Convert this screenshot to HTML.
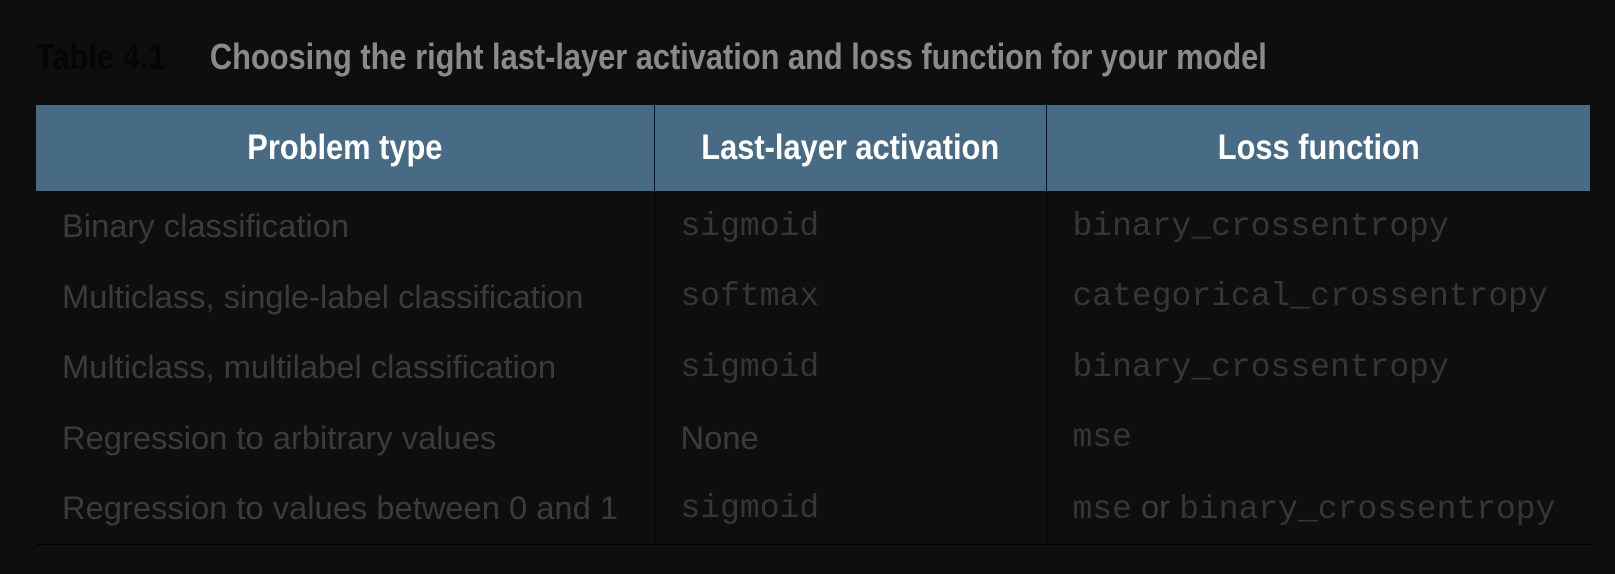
<!DOCTYPE html>
<html><head><meta charset="utf-8"><style>
html,body{margin:0;padding:0;background:#0e0e0e;width:1615px;height:574px;overflow:hidden}
.t{position:absolute;top:36px;left:36px;font-family:"Liberation Sans",sans-serif;font-weight:bold;font-size:36px;color:#8a8a8a;white-space:nowrap;transform:scaleX(0.855);transform-origin:left top}
.t b{color:#050505;margin-right:52px}
table{position:absolute;left:36px;top:105px;width:1554px;border-collapse:collapse}
th{background:#476b85;color:#fff;height:86px;padding:0;border-left:1px solid #0e0e0e}
th span{display:inline-block;font-family:"Liberation Sans",sans-serif;font-weight:bold;font-size:35px;transform:scaleX(0.88)}
th:first-child{border-left:none}
td{height:70.5px;padding:0 0 0 26px;font-family:"Liberation Sans",sans-serif;font-size:32.7px;color:#3b3b3b;border-left:1px solid #000;white-space:nowrap}
td:first-child{border-left:none}
tr:last-child td{border-bottom:1px solid #000}
.m{font-family:"Liberation Mono",monospace;font-size:33px;color:#363636}
</style></head><body>
<div class="t"><b>Table 4.1</b>Choosing the right last-layer activation and loss function for your model</div>
<table>
<colgroup><col style="width:618px"><col style="width:392px"><col></colgroup>
<tr><th><span>Problem type</span></th><th><span>Last-layer activation</span></th><th><span>Loss function</span></th></tr>
<tr><td>Binary classification</td><td class="m">sigmoid</td><td class="m">binary_crossentropy</td></tr>
<tr><td>Multiclass, single-label classification</td><td class="m">softmax</td><td class="m">categorical_crossentropy</td></tr>
<tr><td>Multiclass, multilabel classification</td><td class="m">sigmoid</td><td class="m">binary_crossentropy</td></tr>
<tr><td>Regression to arbitrary values</td><td>None</td><td class="m">mse</td></tr>
<tr><td>Regression to values between 0 and 1</td><td class="m">sigmoid</td><td><span class="m">mse</span> or <span class="m">binary_crossentropy</span></td></tr>
</table>
</body></html>
